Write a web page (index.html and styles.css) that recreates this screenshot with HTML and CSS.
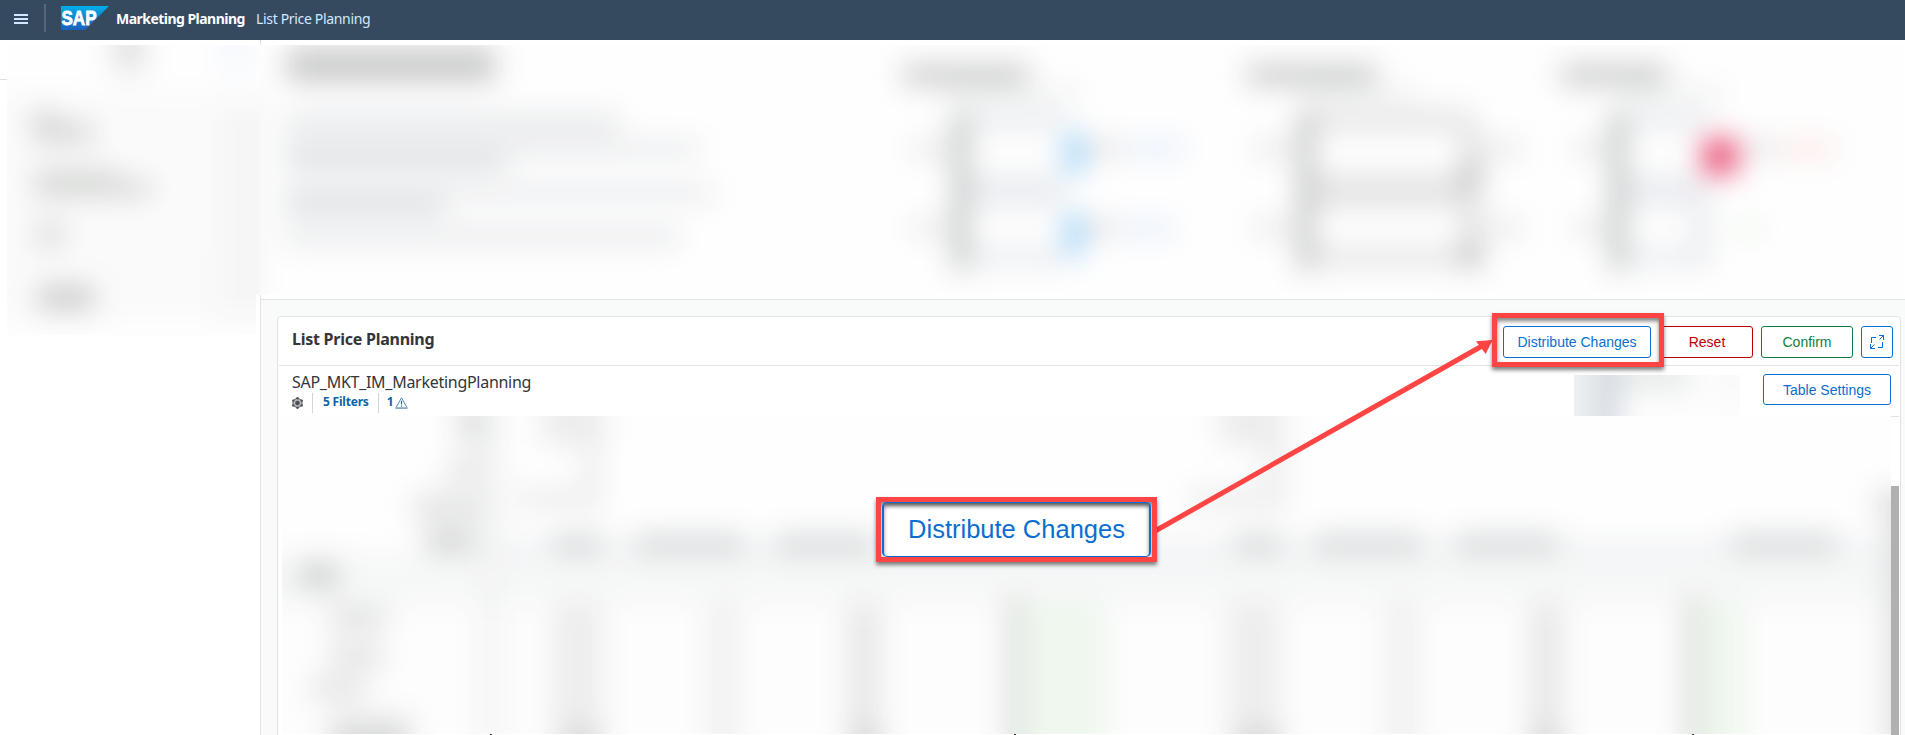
FILE: index.html
```html
<!DOCTYPE html>
<html lang="en">
<head>
<meta charset="utf-8">
<title>List Price Planning</title>
<link rel="stylesheet" href="styles.css">
</head>
<body>
<header class="shell">
  <svg class="menu" width="14" height="10" viewBox="0 0 14 10"><path d="M0 1h14M0 5h14M0 9h14" stroke="#d1e8ff" stroke-width="2"/></svg>
  <span class="shell-sep"></span>
  <svg class="logo" width="48" height="24" viewBox="0 0 48 24">
    <defs><linearGradient id="sap" x1="0" y1="0" x2="0" y2="1"><stop offset="0" stop-color="#00b1eb"/><stop offset=".45" stop-color="#0c86d2"/><stop offset="1" stop-color="#1d60bc"/></linearGradient></defs>
    <path d="M0 0h48L24.300 24H0z" fill="url(#sap)"/>
    <text class="logo-text" x="0.500" y="19" textLength="35" lengthAdjust="spacingAndGlyphs">SAP</text>
  </svg>
  <span class="product">Marketing Planning</span>
  <span class="page-name">List Price Planning</span>
</header>
<div class="layout">
  <aside class="side">
    <svg class="side-haze" width="260" height="300" viewBox="0 40 260 300">
      <defs>
        <filter id="haze" x="-5%" y="-5%" width="110%" height="110%" color-interpolation-filters="sRGB"><feGaussianBlur stdDeviation="14"/></filter>
        <clipPath id="sideclip"><path d="M7 45H260V295H256V335H7z"/></clipPath>
      </defs>
      <path d="M0 79.500H7" stroke="#e0e0e0"/>
      <g clip-path="url(#sideclip)">
        <g class="haze" filter="url(#haze)">
          <path d="M-60-20H340V400H-60z" fill="#fefefe"/>
          <path d="M-40 92H220V320H-40z" fill="#f9faf9"/>
          <path d="M218 100H290V320H218z" fill="#f5f5f5"/>
          <path d="M114 20H144V72H114z" fill="#dcdcdc"/>
          <path d="M222 20H252V74H222z" fill="#f4f8fd"/>
          <path d="M32 112H58V124H32zM34 124H94V142H34z" fill="#c9cac9"/>
          <path d="M34 170H118V182H34zM34 180H152V197H34z" fill="#ced0ce"/>
          <path d="M34 222H66V248H34z" fill="#d8dad8"/>
          <path d="M38 286H94V310H38z" fill="#c0c2c0"/>
        </g>
      </g>
    </svg>
  </aside>
  <main class="content">
    <svg class="hero" width="1644" height="259" viewBox="261 40 1644 259">
      <defs><clipPath id="heroclip"><path d="M261 45H1905V295H261z"/></clipPath></defs>
      <g clip-path="url(#heroclip)">
        <path d="M261 45H1905V295H261z" fill="#fff"/>
        <g class="haze" filter="url(#haze)">
          <path d="M160-20H2000V360H160z" fill="#fefefe"/>
          <path d="M225 90H262V300H225z" fill="#f3f4f4"/>
          <path d="M288 48H496V82H288z" fill="#c0c1c2"/>
          <path d="M286 114H620V134H286zM286 142H700V156H286zM286 186H714V200H286zM286 228H680V244H286z" fill="#e2e4e7"/>
          <path d="M286 154H508V170H286zM286 196H446V214H286z" fill="#d6dbde"/>
          <path d="M904 65H1030V85H904zM1248 65H1378V85H1248zM1562 65H1668V85H1562z" fill="#bfc2c0"/>
          <path d="M946 86H1080V104H946zM1300 86H1420V104H1300zM1620 86H1725V104H1620z" fill="#f1f2f2"/>
          <path d="M965 110H1065V130H965zM965 174H1065V208H965zM965 248H1065V266H965z" fill="#e7eaee"/>
          <path d="M1620 110H1710V130H1620zM1620 174H1710V208H1620zM1620 248H1710V266H1620z" fill="#e7eaef"/>
          <path d="M1695 208H1710V262H1695z" fill="#e0e4ea"/>
          <path d="M1305 110H1472V130H1305zM1305 174H1472V208H1305zM1305 248H1472V266H1305z" fill="#dfdfdf"/>
          <path d="M954 112H970V270H954zM1299 112H1315V270H1299zM1611 112H1627V270H1611z" fill="#b8bbba"/>
          <path d="M1464 125H1480V262H1464z" fill="#d4d4d4"/>
          <path d="M1462 166H1482V184H1462zM1462 246H1482V266H1462z" fill="#aaa"/>
          <path d="M914 142H950V156H914zM914 221H950V235H914zM1256 142H1292V156H1256zM1256 221H1292V235H1256zM1576 142H1606V156H1576zM1576 221H1606V235H1576zM1486 142H1522V156H1486zM1486 221H1522V235H1486z" fill="#dfe0df"/>
          <path d="M1084 142H1122V156H1084zM1084 221H1118V235H1084zM1745 142H1776V156H1745z" fill="#dddbdc"/>
          <path d="M1126 141H1186V156H1126zM1120 221H1176V236H1120z" fill="#e0ebfb"/>
          <path d="M1780 142H1836V156H1780z" fill="#fedede"/>
          <path d="M1735 221H1768V236H1735z" fill="#eef7ec"/>
          <path d="M1065 132H1085V174H1065zM1065 213H1085V256H1065z" fill="#97d0fa"/>
          <path d="M1704 139H1738V174H1704z" fill="#e62e58"/>
        </g>
      </g>
    </svg>
    <section class="canvas">
      <div class="card">
        <div class="card-head">
          <h1 class="card-title">List Price Planning</h1>
          <div class="actions">
            <button class="btn distribute">Distribute Changes</button>
            <button class="btn reset">Reset</button>
            <button class="btn confirm">Confirm</button>
            <button class="btn expand"><svg width="14" height="14" viewBox="0 0 14 14" fill="none" stroke="#0a6ed1"><path d="M6 2.500H1.500V8M8 12.500h4.500V7M9 .5h4.500V5M13.500 .5L9.500 4.500M.5 9v4.500H5M.5 13.500l4-4"/></svg></button>
          </div>
        </div>
        <div class="table-head">
          <div class="model">
            <div class="model-name">SAP_MKT_IM_MarketingPlanning</div>
            <div class="meta">
              <svg class="cube" width="11" height="12" viewBox="0 0 11 12"><path d="M5.500 1L10 3.500v5L5.500 11 1 8.500v-5z" fill="#b9bbbd" stroke="#5b6066"/><path d="M5.500 3.500L7.700 4.800v2.500L5.500 8.600 3.300 7.300V4.800z" fill="#4d5157"/><g fill="#4d5157"><circle cx="5.500" cy="1.200" r="1.200"/><circle cx="9.700" cy="3.600" r="1.200"/><circle cx="9.700" cy="8.400" r="1.200"/><circle cx="5.500" cy="10.800" r="1.200"/><circle cx="1.300" cy="8.400" r="1.200"/><circle cx="1.300" cy="3.600" r="1.200"/></g></svg>
              <span class="sep"></span>
              <span class="filters">5 Filters</span>
              <span class="sep"></span>
              <span class="warn">1</span>
              <svg class="warn-icon" width="13" height="12" viewBox="0 0 13 12"><path d="M6.500 .8L12.300 11.200H.7z" fill="none" stroke="#5289b5" stroke-linejoin="round"/><path d="M1 10.500h11" stroke="#9db9cf"/><path d="M6.500 3.800v3.700M6.500 8.500v1.200" stroke="#346187" stroke-width="1.200"/></svg>
            </div>
          </div>
          <svg class="tool-haze" width="178" height="42" viewBox="1574 374 178 42">
            <defs><clipPath id="toolclip"><path d="M1574 375H1740V416H1574z"/></clipPath></defs>
            <g clip-path="url(#toolclip)"><g filter="url(#haze)"><path d="M1400 250H1900V550H1400z" fill="#fdfdfd"/><path d="M1500 340H1592V450H1500z" fill="#eff1f2"/><path d="M1594 350H1620V450H1594z" fill="#d2d9e2"/><path d="M1620 366H1690V388H1620z" fill="#e2e5e5"/><path d="M1724 350H1740V402H1724z" fill="#f6f6f6"/></g></g>
          </svg>
          <button class="btn settings">Table Settings</button>
        </div>
        <div class="grid">
          <svg class="grid-haze" width="1609" height="319" viewBox="282 416 1609 319">
            <defs><clipPath id="gridclip"><path d="M282 416H1891V734H282z"/></clipPath></defs>
            <g clip-path="url(#gridclip)">
              <g class="haze" filter="url(#haze)">
                <path d="M180 340H1990V820H180z" fill="#fefefe"/>
                <path d="M180 598H1990V820H180z" fill="#fdfdfd"/>
                <path d="M470 542H1990V566H470z" fill="#eceef2"/>
                <path d="M180 554H1990V604H180z" fill="#f5f6f6"/>
                <path d="M480 380H502V800H480z" fill="#f0f2f1"/>
                <path d="M458 400H484V444H458zM446 462H484V480H446zM414 496H484V518H414z" fill="#d9dada"/>
                <path d="M426 530H474V552H426z" fill="#c8c9ca"/>
                <path d="M542 400H604V444H542zM584 444H600V510H584zM515 490H600V508H515z" fill="#e8e8e8"/>
                <path d="M1220 400H1284V444H1220zM1264 444H1284V510H1264zM1190 490H1280V508H1190z" fill="#e8e8e8"/>
                <path d="M552 535H602V554H552zM636 535H744V554H636zM776 535H874V554H776zM1234 535H1282V554H1234zM1314 535H1422V554H1314zM1456 535H1558V554H1456zM1732 535H1836V554H1732z" fill="#cccfd1"/>
                <path d="M1876 490H1960V514H1876zM1886 514H1960V800H1886z" fill="#d9dada"/>
                <path d="M300 563H338V588H300z" fill="#c6c7c7"/>
                <path d="M330 608H386V628H330zM330 646H382V666H330zM312 680H366V698H312z" fill="#d7d8d8"/>
                <path d="M330 718H410V800H330z" fill="#d5d6d6"/>
                <path d="M552 604H602V800H552zM1228 604H1280V800H1228z" fill="#eaeaea"/>
                <path d="M708 604H738V800H708zM1386 604H1418V800H1386z" fill="#eee"/>
                <path d="M848 604H880V800H848zM1530 604H1562V800H1530z" fill="#e3e3e3"/>
                <path d="M564 728H600V800H564zM850 728H882V800H850zM1238 728H1280V800H1238zM1532 728H1562V800H1532z" fill="#d0d0d0"/>
                <path d="M1018 602H1106V800H1018zM1696 602H1744V800H1696z" fill="#ecf6ec"/>
                <path d="M1006 596H1022V800H1006zM1684 596H1700V800H1684z" fill="#d3d8d2"/>
              </g>
            </g>
            <path d="M490 734h2v1h-2zM1014 734h2v1h-2zM1692 734h2v1h-2z" fill="#333"/>
          </svg>
          <div class="scroll"><div class="thumb"></div></div>
        </div>
      </div>
    </section>
  </main>
</div>
<svg class="arrow" width="360" height="210" viewBox="1145 330 360 210"><path d="M1156 530.500L1482 346" stroke="#ff4444" stroke-width="5"/><path d="M1492.500 340L1476 341.300 1485.700 354z" fill="#ff4444"/></svg>
<div class="highlight"></div>
<div class="callout"><div class="callout-btn">Distribute Changes</div></div>
</body>
</html>
```
FILE: styles.css
```css
* { box-sizing: border-box; }
body {
  margin: 0;
  height: 735px;
  overflow: hidden;
  display: flex;
  flex-direction: column;
  background: #fff;
  color: #32363a;
  font-family: "Noto Sans", "Open Sans", sans-serif;
}
svg { display: block; flex: none; }
.haze { opacity: .84; }
.shell {
  height: 40px;
  flex: none;
  display: flex;
  align-items: flex-start;
  background: #354a5f;
  padding-left: 14px;
  white-space: nowrap;
}
.menu { margin-top: 14px; }
.shell-sep { width: 2px; height: 28px; margin: 4px 15px 0 16px; background: #54677d; }
.logo { margin-top: 6px; }
.logo-text { font: bold 20px "Liberation Sans", sans-serif; fill: #fff; stroke: #fff; stroke-width: .8px; }
.product { margin: 9px 0 0 7px; width: 130px; font-size: 14px; line-height: 20px; font-weight: 700; letter-spacing: -.53px; color: #fff; }
.page-name { margin: 9px 0 0 10px; font-size: 14px; line-height: 20px; letter-spacing: -.33px; color: #d1e8ff; }
.layout { flex: 1; display: grid; grid-template-columns: 260px 1fr; min-height: 0; }
.side { background: #fff; }
.content { display: flex; flex-direction: column; border-left: 1px solid #e2e4e4; min-width: 0; min-height: 0; }
.hero { margin-left: -1px; }
.canvas {
  flex: 1;
  min-height: 0;
  padding: 16px 4px 0 16px;
  background: #f9fbfa;
  border-top: 1px solid #e2e3e3;
}
.card {
  height: 430px;
  background: #fff;
  border: 1px solid #e2e3e3;
  border-radius: 4px;
}
.card-head {
  height: 49px;
  margin: 0 1px;
  padding: 9px 6px 0 13px;
  display: flex;
  justify-content: space-between;
  align-items: flex-start;
  border-bottom: 1px solid #e2e3e3;
}
.card-title { margin: 1px 0 0; font-size: 16px; line-height: 24px; font-weight: 700; letter-spacing: -.25px; white-space: nowrap; }
.actions { display: flex; gap: 8px; }
.btn {
  height: 32px;
  padding: 0;
  border: 1px solid #0a6ed1;
  border-radius: 3px;
  background: #fff;
  color: #0a6ed1;
  font: 14px "Liberation Sans", sans-serif;
}
.distribute { width: 148px; }
.reset { width: 94px; padding-left: 2px; border-color: #b00; color: #b00; }
.confirm { width: 92px; border-color: #107e3e; color: #107e3e; }
.expand { width: 32px; display: grid; place-items: center; }
.table-head { height: 50px; display: flex; padding: 0 9px 0 14px; }
.model { flex: 1; }
.model-name { margin-top: 6px; font-size: 16px; line-height: 21px; letter-spacing: -.28px; white-space: nowrap; }
.meta { display: flex; align-items: flex-start; height: 20px; font-size: 12px; line-height: 18px; font-weight: 700; letter-spacing: -.2px; color: #0a64a8; }
.cube { margin: 4px 0 0; }
.sep { width: 1px; height: 20px; background: #d2d5d8; margin: 0 10px 0 9px; }
.warn { margin-left: -2px; }
.warn-icon { margin: 4px 0 0 2px; }
.tool-haze { margin: 8px 11px 0 0; }
.settings { width: 128px; height: 31px; margin-top: 8px; }
.grid { display: flex; padding-left: 4px; }
.scroll { width: 8px; border-top: 1px solid #e2e3e3; padding-top: 69px; }
.thumb { height: 250px; background: #b0b0b0; }
.highlight, .callout { position: absolute; border: 5px solid #ff4444; box-shadow: 0 3px 4px rgba(0,0,0,.5), inset 0 3px 4px rgba(0,0,0,.5); }
.highlight { left: 1492px; top: 313px; width: 172px; height: 54px; }
.arrow { position: absolute; left: 1145px; top: 330px; }
.callout { left: 876px; top: 497px; width: 281px; height: 65px; padding: 0 1px; background: #fff; }
.callout-btn {
  height: 55px;
  border: 2px solid #0a6ed1;
  border-top-width: 1px;
  border-bottom-width: 1px;
  border-radius: 5px;
  box-shadow: inset 0 3px 4px rgba(0,0,0,.4);
  text-align: center;
  font: 25.500px/52px "Liberation Sans", sans-serif;
  color: #0a6ed1;
}
```
